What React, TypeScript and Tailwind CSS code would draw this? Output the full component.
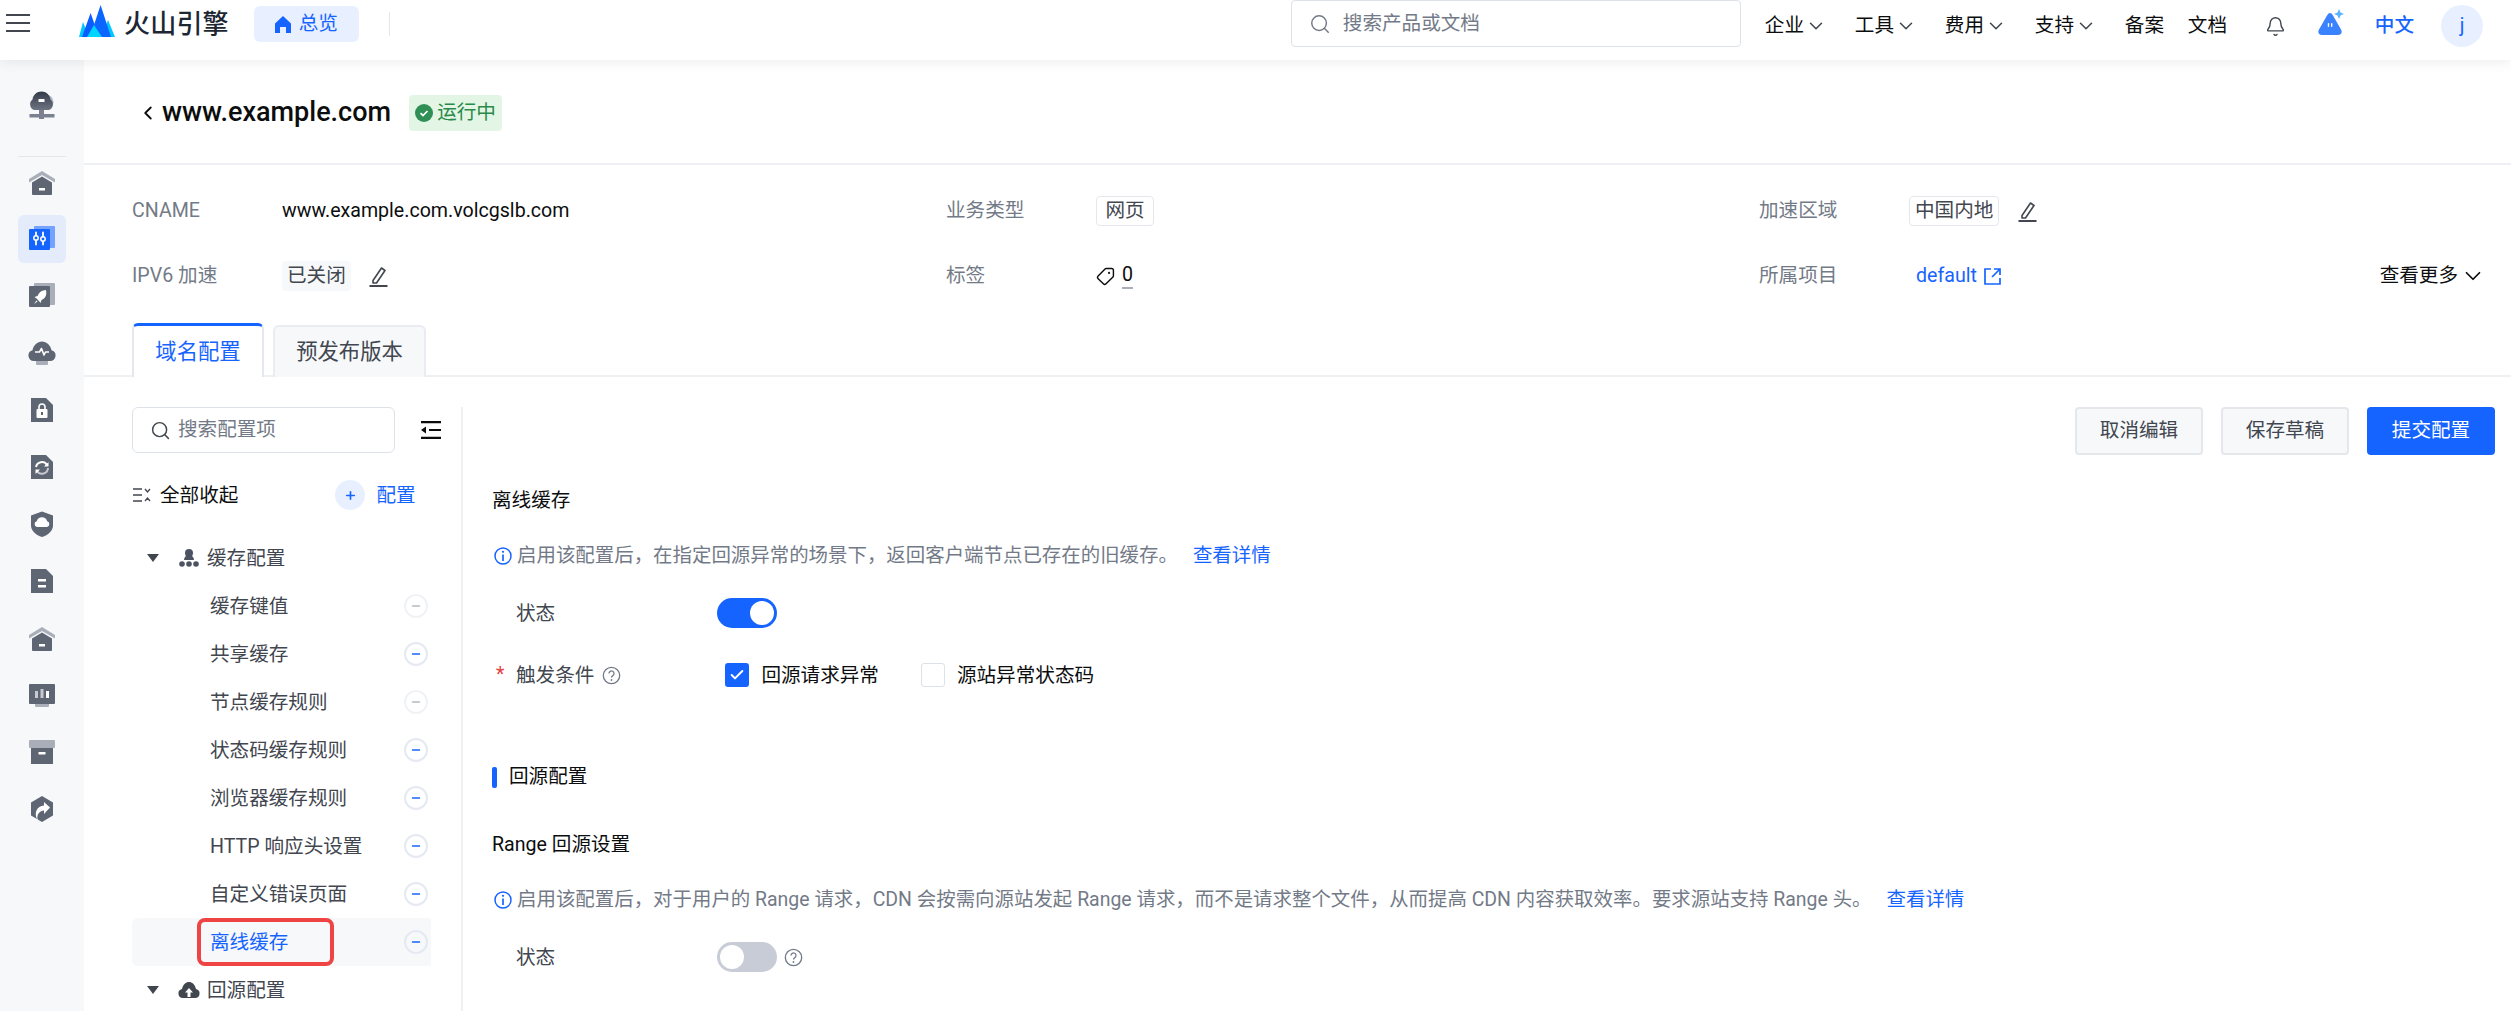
import { ChevronDown, ChevronLeft, Search, Bell, Check, Plus, Minus, Tag } from "lucide-react";
import type { ReactNode } from "react";

const DARK = "#5e6573";
const LIGHT = "#a9aeb8";

function RailSvg({ children }: { children: ReactNode }) {
  return (
    <svg width="28" height="28" viewBox="0 0 28 28" fill="none">
      {children}
    </svg>
  );
}

const railIcons: ReactNode[] = [
  <RailSvg key="cloud-net">
    <defs>
      <linearGradient id="cn" x1="0" y1="0" x2="0" y2="1">
        <stop offset="0" stopColor="#333a48" />
        <stop offset="1" stopColor="#6e7482" />
      </linearGradient>
    </defs>
    <circle cx="18" cy="11" r="7.5" fill="#b4b9c4" />
    <path d="M6 19a6 6 0 0 1-1.500-10.400C5 3.800 9 0.500 13.500 0.500S22 3.800 22.500 8.600A6 6 0 0 1 21 19Z" fill="url(#cn)" />
    <rect x="10.500" y="8" width="6" height="3" rx="0.500" fill="#fff" />
    <path d="M1.500 23h25v3.500h-25zM11 19h5v9h-5z" fill="#7b8190" />
  </RailSvg>,
  <RailSvg key="house">
    <path d="M1 11 14 3l13 8v3.500L14 7 1 14.500Z" fill={LIGHT} />
    <path d="M4 14.500 14 8.500l10 6V26a1 1 0 0 1-1 1H5a1 1 0 0 1-1-1Z" fill={DARK} />
    <rect x="11" y="20" width="6" height="2.500" fill="#fff" />
  </RailSvg>,
  <RailSvg key="config">
    <rect x="6" y="1" width="21" height="22" rx="1" fill="#76a2ff" />
    <rect x="1" y="4" width="21" height="21" rx="1" fill="#1664ff" />
    <path d="M8 7.500v3M8 15.500v4M15 7.500v4M15 16.500v3" stroke="#fff" strokeWidth="1.800" strokeLinecap="round" />
    <circle cx="8" cy="13" r="2.200" stroke="#fff" strokeWidth="1.500" />
    <circle cx="15" cy="14" r="2.200" stroke="#fff" strokeWidth="1.500" />
  </RailSvg>,
  <RailSvg key="rocket">
    <rect x="6" y="1" width="21" height="22" rx="1" fill={LIGHT} />
    <rect x="1" y="4" width="21" height="21" rx="1" fill={DARK} />
    <path d="M18 8c-4 0-7 2-8.500 6l-3 1 2 1.500 2.500 2.500 1.500 2 1-3c4-1.500 5.500-5 4.500-10Z" fill="#fff" />
    <path d="M6 22l2.500-3.500 1 1Z" fill="#fff" />
  </RailSvg>,
  <RailSvg key="pulse">
    <rect x="8" y="20" width="12" height="6" rx="1" fill={LIGHT} />
    <path d="M6 22a5.500 5.500 0 0 1-1.500-10.800C5.500 6 9.500 2.500 14 2.500s8.500 3.500 9.500 8.700A5.500 5.500 0 0 1 22 22Z" fill={DARK} />
    <path d="M7 13h4.500l2-3.500 2.500 6.500 1.500-3H21" stroke="#fff" strokeWidth="1.600" strokeLinejoin="round" />
  </RailSvg>,
  <RailSvg key="lock">
    <path d="M3 2h15l7 7v17H3Z" fill={DARK} />
    <rect x="8.500" y="13" width="11" height="9" rx="1" fill="#fff" />
    <path d="M11 13v-2a3 3 0 0 1 6 0v2" stroke="#fff" strokeWidth="1.600" />
    <rect x="13" y="16" width="2" height="3" fill={DARK} />
  </RailSvg>,
  <RailSvg key="refresh">
    <path d="M3 2h15l7 7v17H3Z" fill={DARK} />
    <path d="M8 14a6 6 0 0 1 11-2" stroke="#fff" strokeWidth="2" />
    <path d="M20 15a6 6 0 0 1-11 3" stroke="#c6cad2" strokeWidth="2" />
    <path d="M20.500 9v4.500H16ZM7.500 21v-4.500H12Z" fill="#fff" />
  </RailSvg>,
  <RailSvg key="shield">
    <path d="M14 1.500 25 5.500v10c0 5.500-5 9.500-11 11.500C8 25 3 21 3 15.500v-10Z" fill={DARK} />
    <path d="M9 17a3 3 0 0 1-.3-5.800 5.500 5.500 0 0 1 10.500 0A3 3 0 0 1 19 17Z" fill="#fff" />
  </RailSvg>,
  <RailSvg key="doc">
    <path d="M3 2h15l7 7v17H3Z" fill={DARK} />
    <rect x="10" y="12" width="8" height="2.500" fill="#fff" />
    <rect x="10" y="18" width="8" height="2.500" fill="#fff" />
  </RailSvg>,
  <RailSvg key="house2">
    <path d="M1 11 14 3l13 8v3.500L14 7 1 14.500Z" fill={LIGHT} />
    <path d="M4 14.500 14 8.500l10 6V26a1 1 0 0 1-1 1H5a1 1 0 0 1-1-1Z" fill={DARK} />
    <rect x="11" y="20" width="6" height="2.500" fill="#fff" />
  </RailSvg>,
  <RailSvg key="monitor">
    <rect x="7" y="19" width="14" height="7" rx="1" fill={LIGHT} />
    <rect x="1" y="3" width="26" height="20" rx="1" fill={DARK} />
    <rect x="7" y="10" width="3" height="7" fill="#c6cad2" />
    <rect x="12.500" y="8" width="3" height="9" fill="#c6cad2" />
    <rect x="18" y="10" width="3" height="7" fill="#fff" />
  </RailSvg>,
  <RailSvg key="box">
    <rect x="1" y="2" width="26" height="8" rx="1" fill={LIGHT} />
    <rect x="3" y="10" width="22" height="16" fill={DARK} />
    <rect x="10.500" y="14" width="7" height="2.500" fill="#fff" />
  </RailSvg>,
  <RailSvg key="hex">
    <path d="M14 1 25 7.500v13L14 27 3 20.500v-13Z" fill={DARK} />
    <path d="M10 26c-2-6 1-10 6-10.500V19l6-6.500L16 7v3.500C9 11 5 18 10 26Z" fill="#fff" />
  </RailSvg>,
];

function Pencil() {
  return (
    <svg width="19" height="21" viewBox="0 0 19 21" fill="none" stroke="#41464f" strokeWidth="1.600">
      <path d="M4 14.500 12.500 2l3.500 2.500L7.500 17H4Z" strokeLinejoin="round" />
      <path d="M0.500 20h18" strokeWidth="2" />
    </svg>
  );
}

function InfoIcon() {
  return (
    <svg width="18" height="18" viewBox="0 0 18 18" fill="none" className="shrink-0 ml-[2px]">
      <circle cx="9" cy="9" r="8" stroke="#1664ff" strokeWidth="1.500" />
      <path d="M9 7.500V14" stroke="#1664ff" strokeWidth="1.700" />
      <circle cx="9" cy="4.800" r="1.100" fill="#1664ff" />
    </svg>
  );
}

function HelpIcon() {
  return (
    <svg width="19" height="19" viewBox="0 0 19 19" fill="none" className="shrink-0">
      <circle cx="9.500" cy="9.500" r="8.200" stroke="#737a87" strokeWidth="1.300" />
      <path d="M7 7.500a2.500 2.500 0 1 1 3.800 2.100c-.9.600-1.300 1-1.300 2" stroke="#737a87" strokeWidth="1.300" />
      <circle cx="9.500" cy="14" r="0.900" fill="#737a87" />
    </svg>
  );
}

function Toggle({ on }: { on: boolean }) {
  return (
    <div
      className={`w-[60px] h-[30px] rounded-full flex items-center px-[3px] shrink-0 ${
        on ? "bg-[#1664ff] justify-end" : "bg-[#c7ccd6] justify-start"
      }`}
    >
      <div className="w-[24px] h-[24px] rounded-full bg-white" />
    </div>
  );
}

const topLinks = ["企业", "工具", "费用", "支持"];

function Header() {
  return (
    <header className="relative z-10 h-[60px] shrink-0 bg-white flex items-start shadow-[0_2px_12px_rgba(0,0,0,0.08)]">
      <button className="w-[24px] ml-[6px] mt-[14px] flex flex-col gap-[6px]">
        <span className="h-[2px] bg-[#41464f] block" />
        <span className="h-[2px] bg-[#41464f] block" />
        <span className="h-[2px] bg-[#41464f] block" />
      </button>
      {/* logo peaks */}
      <svg width="36" height="32" viewBox="0 0 36 32" className="ml-[49px] mt-[5px] shrink-0">
        <path d="M0 32 4 17 10 32Z" fill="#00c8ff" />
        <path d="M22 32 29 15 36 32Z" fill="#00c8ff" />
        <path d="M3 32 11.600 8 20 32Z" fill="#0a5cff" />
        <path d="M11 32 21.600 0 32 32Z" fill="#0a66ff" />
        <path d="M8 32 15 20 23 32Z" fill="#00d5ff" />
      </svg>
      <span className="ml-[9px] mt-[7px] text-[26px] leading-[34px] font-medium text-[#1c2733] tracking-[0.2px]">火山引擎</span>
      <div className="ml-[25px] mt-[6px] w-[105px] h-[36px] rounded-[6px] bg-[#e8f0ff] flex items-center justify-center gap-[8px] text-[#1664ff]">
        <svg width="16" height="17" viewBox="0 0 16 17" fill="#1664ff">
          <path d="M0 7.500 8 0l8 7.500V17h-5v-6H5v6H0Z" />
        </svg>
        总览
      </div>
      <div className="ml-[30px] mt-[12px] w-px h-[24px] bg-[#e4e7ec]" />
      <div className="ml-[901px] w-[450px] h-[47px] rounded-[4px] border border-[#dde2e9] flex items-center pl-[17px] gap-[12px] text-[#737a87] shrink-0">
        <Search size={22} strokeWidth={1.6} />
        搜索产品或文档
      </div>
      <nav className="ml-[24px] h-[52px] flex items-center text-[#0c0d0e]">
        {topLinks.map((l) => (
          <span key={l} className="w-[90px] flex items-center gap-[1px]">
            {l}
            <ChevronDown size={22} strokeWidth={1.7} className="text-[#41464f]" />
          </span>
        ))}
        <span className="w-[63px]">备案</span>
        <span className="w-[77px]">文档</span>
        <Bell size={21} strokeWidth={1.6} className="text-[#41464f]" />
        <svg width="27" height="28" viewBox="0 0 27 28" className="ml-[32px] -translate-y-[3px]">
          <path d="M12 4c1 0 2 .8 3 2.500l8 14c1.500 2.500.5 5.500-3 5.500H4c-3.500 0-4.500-3-3-5.500l8-14c1-1.700 2-2.500 3-2.500Z" fill="#3b82ff" />
          <path d="M21 0l1.500 3.500L26 5l-3.500 1.500L21 10l-1.500-3.500L16 5l3.500-1.500Z" fill="#5cb4ff" />
          <rect x="9.800" y="14" width="1.400" height="4" rx="0.700" fill="#fff" />
          <rect x="13" y="14" width="1.400" height="4" rx="0.700" fill="#fff" />
        </svg>
        <span className="ml-[30px] text-[#1664ff] font-medium">中文</span>
        <span className="ml-[27px] w-[42px] h-[42px] rounded-full bg-[#e8f0ff] text-[#1664ff] flex items-center justify-center">j</span>
      </nav>
    </header>
  );
}

function Rail() {
  return (
    <aside className="w-[84px] shrink-0 bg-[#f6f8fa] flex flex-col items-center">
      <div className="h-[96px] w-full flex items-center justify-center pb-[6px]">{railIcons[0]}</div>
      <div className="w-[48px] h-px bg-[#e4e7ec]" />
      <div className="w-full -mt-[4px]">
        {railIcons.slice(1).map((icon, i) => (
          <div key={i} className="w-full h-[57px] flex items-center justify-center">
            <div className={`w-[48px] h-[48px] rounded-[6px] flex items-center justify-center ${i === 1 ? "bg-[#e4ecfb]" : ""}`}>
              {icon}
            </div>
          </div>
        ))}
      </div>
    </aside>
  );
}

function InfoCell({ label, children }: { label: string; children: ReactNode }) {
  return (
    <div className="flex items-center h-[30px]">
      <span className="w-[150px] shrink-0 text-[#737a87]">{label}</span>
      {children}
    </div>
  );
}

const treeItems = [
  { name: "缓存键值", on: false },
  { name: "共享缓存", on: true },
  { name: "节点缓存规则", on: false },
  { name: "状态码缓存规则", on: true },
  { name: "浏览器缓存规则", on: true },
  { name: "HTTP 响应头设置", on: true },
  { name: "自定义错误页面", on: true },
  { name: "离线缓存", on: true, active: true },
];

function Caret() {
  return (
    <svg width="12" height="8" viewBox="0 0 12 8" className="ml-[15px] shrink-0">
      <path d="M0 0h12L6 8Z" fill="#41464f" />
    </svg>
  );
}

function Tree() {
  return (
    <aside className="w-[331px] shrink-0 pr-[30px] border-r-2 border-[#eef0f3] mt-[30px]">
      <div className="flex items-center">
        <div className="w-[263px] h-[46px] shrink-0 rounded-[6px] border border-[#dde2e9] flex items-center pl-[17px] gap-[7px] text-[#737a87]">
          <Search size={21} strokeWidth={1.7} className="text-[#41464f]" />
          搜索配置项
        </div>
        <svg width="20" height="18" viewBox="0 0 20 18" className="ml-[26px] shrink-0" fill="#0c0d0e">
          <path d="M0 0h20v2.200H0zM8 7.900h12v2.200H8zM0 15.800h20V18H0zM5 5.500v7L0 9Z" />
        </svg>
      </div>
      <div className="h-[30px] mt-[27px] flex items-center text-[#0c0d0e]">
        <svg width="18" height="14" viewBox="0 0 18 14" fill="none" stroke="#41464f" strokeWidth="1.300" className="ml-px">
          <path d="M0 1h9M0 7h9M0 13h9M12 1l2.500 3L17 1M12 13l2.500-3 2.500 3" />
        </svg>
        <span className="ml-[9px] pt-[2px]">全部收起</span>
        <span className="ml-[97px] w-[30px] h-[30px] rounded-full bg-[#e8f0ff] flex items-center justify-center">
          <Plus size={13} strokeWidth={3} className="text-[#1664ff]" />
        </span>
        <span className="ml-[11px] pt-[2px] text-[#1664ff]">配置</span>
      </div>
      <div className="mt-[24px] h-[48px] flex items-center text-[#41464f]">
        <Caret />
        <svg width="20" height="18" viewBox="0 0 20 18" fill="#4c5361" className="ml-[20px]">
          <circle cx="10" cy="4" r="4" />
          <path d="M5 11a5 5 0 0 1 10 0Z" />
          <circle cx="3" cy="15" r="2.800" />
          <circle cx="10" cy="15" r="2.800" />
          <circle cx="17" cy="15" r="2.800" />
        </svg>
        <span className="ml-[8px] pt-[2px]">缓存配置</span>
      </div>
      {treeItems.map((item) => (
        <div
          key={item.name}
          className={`relative h-[48px] flex items-center pl-[78px] ${
            item.active ? "bg-[#f6f8fa] rounded-l-[6px] text-[#1664ff]" : "text-[#41464f]"
          }`}
        >
          {item.active && (
            <div className="absolute left-[65px] top-0 w-[137px] h-[48px] rounded-[8px] border-[4px] border-[#ee4444]" />
          )}
          <span className="pt-[2px]">{item.name}</span>
          <span
            className={`absolute right-[3px] top-[12px] w-[24px] h-[24px] rounded-full border-2 flex items-center justify-center ${
              item.on ? "border-[#e4e9f2] text-[#1664ff]" : "border-[#f0f2f5] text-[#b4b9c4]"
            } ${item.active ? "bg-[#f6f8fa]" : "bg-white"}`}
          >
            <Minus size={12} strokeWidth={3} />
          </span>
        </div>
      ))}
      <div className="h-[48px] flex items-center text-[#41464f]">
        <Caret />
        <svg width="22" height="18" viewBox="0 0 22 18" className="ml-[19px]">
          <path d="M5 17a4.500 4.500 0 0 1-1-8.900C5 3.500 8 1 11 1s6 2.500 7 7.100A4.500 4.500 0 0 1 17 17Z" fill="#41464f" />
          <path d="M11 7l4 4.500h-2.500V16h-3v-4.500H7Z" fill="#fff" />
        </svg>
        <span className="ml-[7px] pt-[2px]">回源配置</span>
      </div>
    </aside>
  );
}

function Notice({ children, link }: { children: ReactNode; link: string }) {
  return (
    <div className="h-[28px] flex items-center text-[#737a87] text-[19.45px]">
      <InfoIcon />
      <span className="ml-[5px]">{children}</span>
      <span className="ml-[15px] text-[#1664ff]">{link}</span>
    </div>
  );
}

function FormLabel({ children }: { children: ReactNode }) {
  return <span className="w-[225px] pl-[24px] pt-[1px] shrink-0 text-[#41464f]">{children}</span>;
}

function Form() {
  return (
    <section className="flex-1 pl-[29px] pr-[16px] pt-[30px]">
      <div className="flex justify-end gap-[18px]">
        <button className="w-[128px] h-[48px] rounded-[4px] bg-[#f6f8fa] border-2 border-[#e4e7ec] text-[#41464f]">取消编辑</button>
        <button className="w-[128px] h-[48px] rounded-[4px] bg-[#f6f8fa] border-2 border-[#e4e7ec] text-[#41464f]">保存草稿</button>
        <button className="w-[128px] h-[48px] rounded-[4px] bg-[#1664ff] text-white">提交配置</button>
      </div>
      <h3 className="mt-[32px] h-[28px] leading-[28px] text-[#0c0d0e] font-normal">离线缓存</h3>
      <div className="mt-[27px]">
        <Notice link="查看详情">启用该配置后，在指定回源异常的场景下，返回客户端节点已存在的旧缓存。</Notice>
      </div>
      <div className="mt-[28px] flex items-center h-[30px]">
        <FormLabel>状态</FormLabel>
        <Toggle on />
      </div>
      <div className="mt-[32px] flex items-center h-[30px]">
        <span className="w-[24px] shrink-0 text-[#e63f3f] pl-[4px]">*</span>
        <span className="text-[#41464f] pt-[1px]">触发条件</span>
        <span className="ml-[8px]"><HelpIcon /></span>
        <span className="ml-[104px] w-[24px] h-[24px] rounded-[3px] bg-[#1664ff] flex items-center justify-center">
          <Check size={16} strokeWidth={3} className="text-white" />
        </span>
        <span className="ml-[12px] text-[#0c0d0e] pt-[1px]">回源请求异常</span>
        <span className="ml-[42px] w-[24px] h-[24px] rounded-[3px] border border-[#dde2e9]" />
        <span className="ml-[12px] text-[#0c0d0e] pt-[1px]">源站异常状态码</span>
      </div>
      <div className="mt-[73px] flex items-center h-[28px]">
        <span className="w-[5px] h-[21px] rounded-[2px] bg-[#1664ff]" />
        <span className="ml-[12px] text-[#0c0d0e]">回源配置</span>
      </div>
      <h3 className="mt-[40px] h-[28px] leading-[28px] text-[#0c0d0e] font-normal">Range 回源设置</h3>
      <div className="mt-[27px]">
        <Notice link="查看详情">
          启用该配置后，对于用户的 Range 请求，CDN 会按需向源站发起 Range 请求，而不是请求整个文件，从而提高 CDN 内容获取效率。要求源站支持 Range 头。
        </Notice>
      </div>
      <div className="mt-[28px] flex items-center h-[30px]">
        <FormLabel>状态</FormLabel>
        <Toggle on={false} />
        <span className="ml-[7px]"><HelpIcon /></span>
      </div>
    </section>
  );
}

export default function App() {
  return (
    <div
      className="w-[2511px] h-[1011px] overflow-hidden bg-white flex flex-col text-[19.6px]"
      style={{ fontFamily: 'Roboto, "Noto Sans CJK SC", sans-serif' }}
    >
      <Header />
      <div className="flex flex-1 min-h-0">
        <Rail />
        <main className="flex-1 min-w-0 flex flex-col">
          <div className="h-[105px] shrink-0 border-b-2 border-[#eef0f3] flex items-center pl-[53px] pt-[2px]">
            <ChevronLeft size={22} strokeWidth={2} className="text-[#0c0d0e]" />
            <h1 className="ml-[3px] text-[27px] font-medium text-[#0c0d0e]">www.example.com</h1>
            <span className="ml-[18px] h-[36px] w-[93px] rounded-[4px] bg-[#e3f6e5] flex items-center justify-center gap-[4px] text-[#2b8a4a]">
              <svg width="18" height="18" viewBox="0 0 18 18">
                <circle cx="9" cy="9" r="9" fill="#2f8f55" />
                <path d="M5.500 9.200 8 11.500l4.500-4.500" stroke="#fff" strokeWidth="1.700" fill="none" />
              </svg>
              运行中
            </span>
          </div>
          <div className="pl-[48px] pt-[31px] pr-[25px] grid grid-cols-[814px_813px_1fr] gap-y-[35px]">
            <InfoCell label="CNAME">
              <span className="text-[#0c0d0e]">www.example.com.volcgslb.com</span>
            </InfoCell>
            <InfoCell label="业务类型">
              <span className="h-[30px] w-[58px] rounded-[4px] border border-[#e4e7ec] flex items-center justify-center text-[#41464f]">网页</span>
            </InfoCell>
            <InfoCell label="加速区域">
              <span className="h-[30px] px-[5px] rounded-[4px] border border-[#e4e7ec] flex items-center text-[#41464f]">中国内地</span>
              <span className="ml-[19px]"><Pencil /></span>
            </InfoCell>
            <InfoCell label="IPV6 加速">
              <span className="h-[30px] px-[5px] rounded-[4px] bg-[#f6f8fa] flex items-center text-[#41464f]">已关闭</span>
              <span className="ml-[18px]"><Pencil /></span>
            </InfoCell>
            <InfoCell label="标签">
              <Tag size={19} strokeWidth={1.8} className="text-[#0c0d0e] -scale-x-100" />
              <span className="ml-[7px] border-b-2 border-dashed border-[#a9aeb8] leading-[24px] text-[#0c0d0e]">0</span>
            </InfoCell>
            <div className="flex items-center h-[30px]">
              <span className="w-[157px] shrink-0 text-[#737a87]">所属项目</span>
              <span className="text-[#1664ff]">default</span>
              <svg width="17" height="17" viewBox="0 0 17 17" fill="none" stroke="#1664ff" strokeWidth="1.700" className="ml-[7px]">
                <path d="M7 1H1v15h15v-6M10 1h6v6M16 1 8 9" />
              </svg>
              <span className="ml-auto flex items-center gap-[2px] text-[#0c0d0e]">
                查看更多
                <ChevronDown size={26} strokeWidth={1.6} />
              </span>
            </div>
          </div>
          <div className="mt-[32px] pl-[48px] h-[54px] shrink-0 border-b-2 border-[#eef0f3] flex items-end text-[21.33px]">
            <div className="w-[132px] h-[54px] -mb-[2px] bg-white rounded-t-[6px] border-2 border-b-0 border-[#e4e7ec] border-t-[3px] border-t-[#1664ff] flex items-center justify-center text-[#1664ff]">
              域名配置
            </div>
            <div className="ml-[9px] w-[153px] h-[52px] -mb-[2px] bg-[#f6f8fa] rounded-t-[6px] border-2 border-b-0 border-[#e9ecf0] flex items-center justify-center text-[#41464f]">
              预发布版本
            </div>
          </div>
          <div className="flex flex-1 min-h-0 pl-[48px]">
            <Tree />
            <Form />
          </div>
        </main>
      </div>
    </div>
  );
}
